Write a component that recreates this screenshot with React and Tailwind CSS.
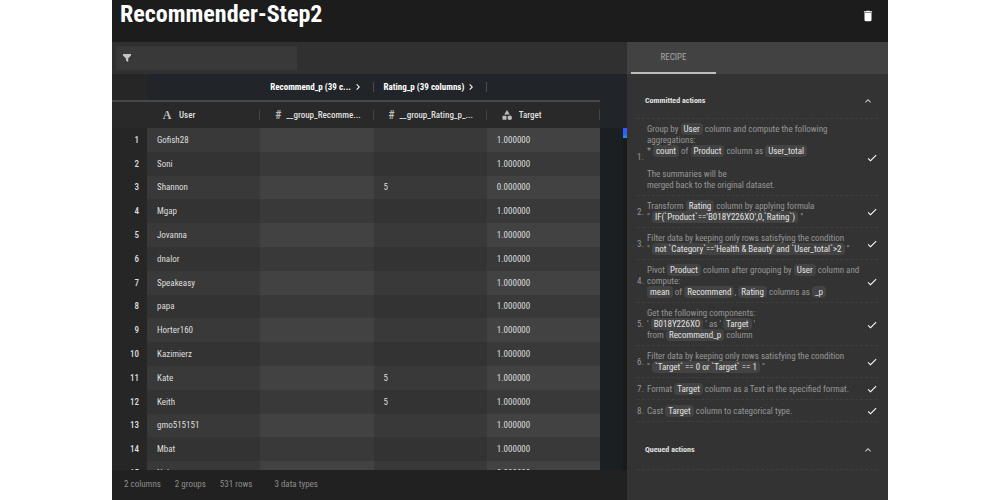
import clsx from 'clsx';
import { MdCategory, MdDelete, MdCheck, MdChevronRight, MdExpandLess } from 'react-icons/md';

const ROWS = [
  ['Gofish28', '', '1.000000'],
  ['Soni', '', '1.000000'],
  ['Shannon', '5', '0.000000'],
  ['Mgap', '', '1.000000'],
  ['Jovanna', '', '1.000000'],
  ['dnalor', '', '1.000000'],
  ['Speakeasy', '', '1.000000'],
  ['papa', '', '1.000000'],
  ['Horter160', '', '1.000000'],
  ['Kazimierz', '', '1.000000'],
  ['Kate', '5', '1.000000'],
  ['Keith', '5', '1.000000'],
  ['gmo515151', '', '1.000000'],
  ['Mbat', '', '1.000000'],
  ['Nuku', '', '0.000000'],
];

const STATS = ['2 columns', '2 groups', '531 rows', '3 data types'];

function Chip({ children }) {
  return <span className="rounded-sm bg-[#434343] px-[3px] py-px text-[#e4e4e4]">{children}</span>;
}

const ACTIONS = [
  <>
    Group by <Chip>User</Chip> column and compute the following
    <br />
    aggregations:
    <br />* <Chip>count</Chip> of <Chip>Product</Chip> column as <Chip>User_total</Chip>
    <p className="mt-3">
      The summaries will be
      <br />
      merged back to the original dataset.
    </p>
  </>,
  <>
    Transform <Chip>Rating</Chip> column by applying formula
    <br />" <Chip>IF(`Product`=='B018Y226XO',0,`Rating`)</Chip> "
  </>,
  <>
    Filter data by keeping only rows satisfying the condition
    <br />" <Chip>not `Category`=='Health &amp; Beauty' and `User_total`&gt;2</Chip> "
  </>,
  <>
    Pivot <Chip>Product</Chip> column after grouping by <Chip>User</Chip> column and
    <br />
    compute:
    <br />
    <Chip>mean</Chip> of <Chip>Recommend</Chip>, <Chip>Rating</Chip> columns as <Chip>_p</Chip>
  </>,
  <>
    Get the following components:
    <br />' <Chip>B018Y226XO</Chip> ' as ' <Chip>Target</Chip> '
    <br />
    from <Chip>Recommend_p</Chip> column
  </>,
  <>
    Filter data by keeping only rows satisfying the condition
    <br />" <Chip>`Target` == 0 or `Target` == 1</Chip> "
  </>,
  <>
    Format <Chip>Target</Chip> column as a Text in the specified format.
  </>,
  <>
    Cast <Chip>Target</Chip> column to categorical type.
  </>,
];

function SectionToggle({ label }) {
  return (
    <button type="button" className="flex w-full items-center justify-between pr-1 pl-2 text-[8px] font-bold text-[#e0e0e0]">
      {label}
      <MdExpandLess className="size-3 text-[#c8c8c8]" />
    </button>
  );
}

function GroupHead({ label }) {
  return (
    <th scope="colgroup" className="pl-2.5">
      <div className="flex items-center">
        <button type="button" className="flex items-center gap-px font-bold whitespace-nowrap">
          {label}
          <MdChevronRight className="size-3" />
        </button>
        <span className="ml-auto h-2.5 w-px bg-[#484c4f]" />
      </div>
    </th>
  );
}

function ColumnHead({ icon, label, numeric }) {
  return (
    <th scope="col" className={clsx('h-[27px] bg-[#292929] font-medium', numeric ? 'pl-3' : 'pl-3.5')}>
      <div className={clsx('flex items-center whitespace-nowrap', numeric ? 'gap-0.5' : 'gap-1.5')}>
        <span className="flex size-3 shrink-0 items-center justify-center text-xs text-[#bdbdbd]">{icon}</span>
        {label}
        <span className="ml-auto h-2.5 w-px bg-[#444]" />
      </div>
    </th>
  );
}

function DataTable() {
  return (
    <table className="h-[411px] w-full table-fixed border-collapse text-left text-[9px] leading-3 text-[#dedede]">
      <colgroup>
        <col className="w-[35px]" />
        <col />
        <col />
        <col />
        <col />
      </colgroup>
      <thead>
        <tr className="border-b-2 border-[#484848] bg-[#212529] text-white">
          <th className="h-[27px] bg-[#262626]" />
          <th />
          <GroupHead label="Recommend_p (39 c..." />
          <GroupHead label="Rating_p (39 columns)" />
          <th />
        </tr>
        <tr>
          <th className="bg-[#292929]" />
          <ColumnHead label="User" icon={<span className="font-['Liberation_Serif'] font-bold">A</span>} />
          <ColumnHead numeric label="__group_Recomme..." icon="#" />
          <ColumnHead numeric label="__group_Rating_p_..." icon="#" />
          <ColumnHead label="Target" icon={<MdCategory className="size-3" />} />
        </tr>
      </thead>
      <tbody>
        {ROWS.map(([user, rating, target], i) => (
          <tr key={user} className="group">
            <th scope="row" className="bg-[#262626] pr-2 text-right font-medium">
              {i + 1}
            </th>
            <td className="bg-[#333] pl-2.5 group-odd:bg-[#393939]">{user}</td>
            <td className="bg-[#393939] pl-2.5 group-odd:bg-[#424242]" />
            <td className="bg-[#333] pl-2.5 group-odd:bg-[#393939]">{rating}</td>
            <td className="bg-[#393939] pl-2.5 group-odd:bg-[#424242]">{target}</td>
          </tr>
        ))}
      </tbody>
    </table>
  );
}

export default function App() {
  return (
    <div className="h-screen bg-white px-28 font-['Roboto_Condensed','Liberation_Sans_Narrow',Roboto,sans-serif]">
      <div className="flex h-full flex-col bg-[#212121]">
        <header className="flex h-[42px] shrink-0 items-start justify-between bg-[#1c1c1c] pr-[13px] pl-2">
          <h1 className="text-2xl leading-7 font-bold text-white">Recommender-Step2</h1>
          <button type="button" aria-label="Delete" className="pt-[9px] text-white">
            <MdDelete className="size-3.5" />
          </button>
        </header>

        <div className="flex min-h-0 flex-1">
          <main className="flex min-w-0 flex-1 flex-col">
            <div className="flex h-8 shrink-0 items-center bg-[#303030] px-1">
              <label className="flex h-6 w-[181px] items-center gap-2 bg-[#393939] px-1.5">
                <svg viewBox="0 0 10 10" className="size-2.5 fill-[#c4c4c4]">
                  <path d="M1 1h8v1.5L6.2 5.5V9L4 7.8V5.5L1 2.5z" />
                </svg>
                <input type="text" aria-label="Filter" className="min-w-0 flex-1 text-[9px] text-white outline-none" />
              </label>
            </div>
            <div className="flex min-h-0 flex-1 overflow-hidden">
              <div className="min-w-0 flex-1">
                <DataTable />
              </div>
              <div className="flex w-[27px] flex-col">
                <div className="h-[54px] bg-[#212529]" />
                <div className="flex flex-1 justify-end bg-[#1a1f22]">
                  <div className="w-1 bg-[#1a1a1a]">
                    <div className="h-2.5 bg-linear-to-b from-[#2f5bff] from-60% to-[#12a5d8]" />
                  </div>
                </div>
              </div>
            </div>
            <footer className="flex h-[30px] shrink-0 items-center gap-3.5 px-3 text-[9px] text-[#8c8c8c]">
              {STATS.map((stat) => (
                <span key={stat} className="last:ml-2">
                  {stat}
                </span>
              ))}
            </footer>
          </main>

          <aside className="w-[261px] shrink-0 bg-[#333]">
            <div role="tablist" className="h-8 bg-[#424242] px-1">
              <button type="button" role="tab" aria-selected="true" className="h-full w-[85px] border-b-2 border-[#bdbdbd] pt-0.5 text-[9px] text-[#a8a8a8]">
                RECIPE
              </button>
            </div>
            <div className="px-2.5">
              <div className="flex h-11 items-center pt-2.5">
                <SectionToggle label="Committed actions" />
              </div>
              <ol className="border-t border-dashed border-[#3f3f3f] text-[9px] leading-[11px] text-[#969696]">
                {ACTIONS.map((action, i) => (
                  <li key={i} className="flex items-center border-b border-dashed border-[#3f3f3f] pt-[5px] pb-1">
                    <span className="w-2.5 shrink-0">{i + 1}.</span>
                    <div className="flex-1 whitespace-nowrap">{action}</div>
                    <MdCheck className="size-3 shrink-0 text-white" />
                  </li>
                ))}
              </ol>
              <div className="flex h-12 items-center border-b border-dashed border-[#3f3f3f] pt-2">
                <SectionToggle label="Queued actions" />
              </div>
            </div>
          </aside>
        </div>
      </div>
    </div>
  );
}
